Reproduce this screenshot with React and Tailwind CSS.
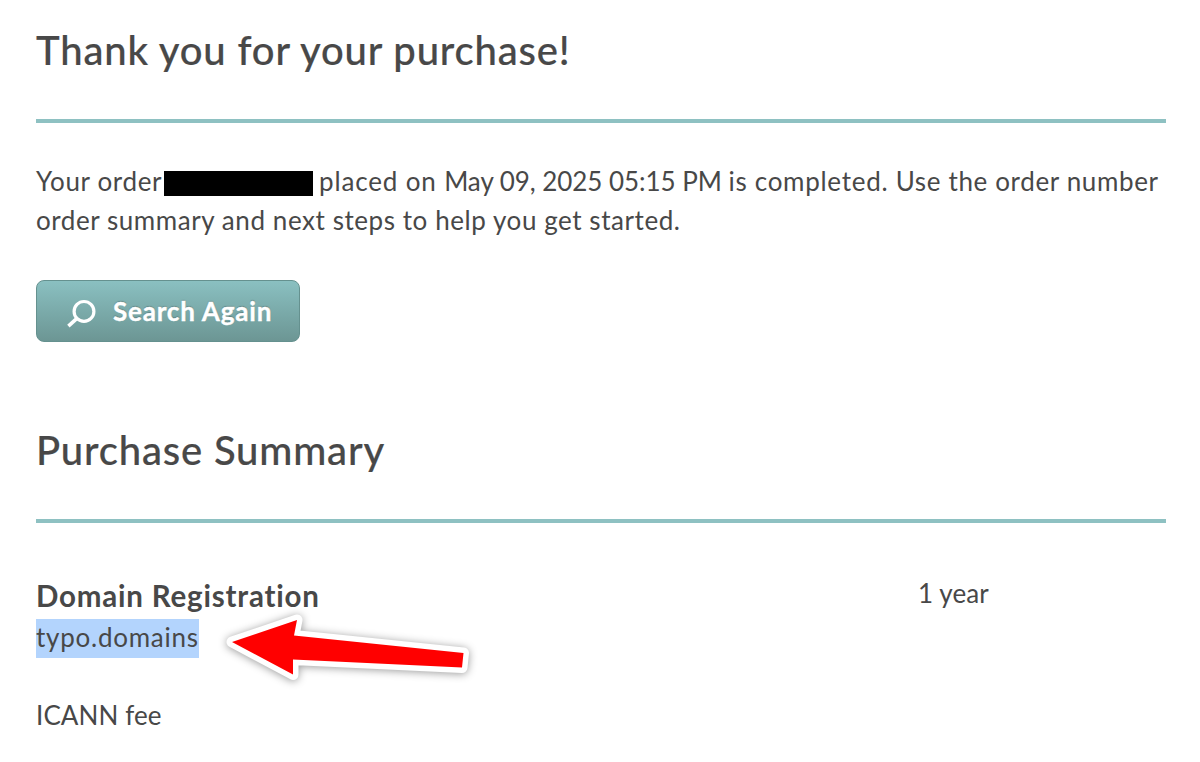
import React from 'react';

function SectionHeading({ children }) {
  return (
    <div className="h-[97px] border-b-4 border-[#8ec1c2]">
      <h2 className="text-[40px] leading-[48px] font-medium tracking-[0.83px] whitespace-nowrap [-webkit-text-stroke:0.2px_#484848]">
        {children}
      </h2>
    </div>
  );
}

function SearchIcon() {
  return (
    <svg className="overflow-visible" width="30" height="30" viewBox="0 0 30 30" fill="none" stroke="white" strokeWidth="3.2">
      <circle cx="17" cy="15.4" r="9.9" />
      <path d="M10.2 22.2 L1.4 30.2" strokeWidth="3.6" />
    </svg>
  );
}

function Arrow() {
  return (
    <svg className="absolute left-[215px] top-[600px]" width="270" height="90" viewBox="0 0 270 90">
      <path
        d="M17 42 L82 20 L79 35.5 L248.5 53 L247 67.5 L78 59.5 L78 74.5 Z"
        fill="#ff0000"
        stroke="white"
        strokeWidth="11"
        strokeLinejoin="round"
        paintOrder="stroke"
        className="drop-shadow-[0_1px_4px_rgba(0,0,0,0.4)]"
      />
    </svg>
  );
}

export default function App() {
  return (
    <div className="relative h-[762px] w-[1200px] overflow-hidden bg-white pt-[26px] pr-[34px] pl-9 font-[Lato,sans-serif] text-[26px] leading-[39px] text-[#484848]">
      <SectionHeading>Thank you for your purchase!</SectionHeading>

      <p className="mt-[39px] whitespace-nowrap">
        <span className="flex h-[39px]">
          <span className="w-[128px] tracking-[0.65px]">Your order</span>
          <span className="mt-[9px] h-[25px] w-[149px] bg-black" />
          <span className="ml-[6px]">
            <span className="tracking-[0.85px]">placed on </span>
            <span className="tracking-[-0.05px]">May 09, 2025 05:15 PM </span>
            <span className="tracking-[0.72px]">is completed. </span>
            <span className="tracking-[0.65px]">Use the order number</span>
          </span>
        </span>
        <span className="block tracking-[0.57px]">order summary and next steps to help you get started.</span>
      </p>

      <button className="mt-10 flex h-[62px] w-[264px] items-center rounded-[8px] border border-[#65918f] bg-linear-to-b from-[#8ac0c1] to-[#6c9694] pl-[30px] font-bold text-white [text-shadow:0_-1px_1px_rgba(0,0,0,0.25)]">
        <SearchIcon />
        <span className="ml-4 text-[26px] tracking-[0.8px] whitespace-nowrap [-webkit-text-stroke:0.4px_white]">Search Again</span>
      </button>

      <div className="mt-[84px]">
        <SectionHeading>Purchase Summary</SectionHeading>
      </div>

      <div className="mt-[51px] flex">
        <div className="w-[882px]">
          <h3 className="h-[45px] text-[29.5px] leading-[44px] font-bold tracking-[0.8px]">Domain Registration</h3>
          <p className="h-[39px] w-[163px] bg-[#b3d4fd] leading-[37px] tracking-[0.75px]">typo.domains</p>
          <p className="mt-[38px] tracking-[0.1px]">ICANN fee</p>
        </div>
        <p className="tracking-[0.1px]">1 year</p>
      </div>

      <Arrow />
    </div>
  );
}
